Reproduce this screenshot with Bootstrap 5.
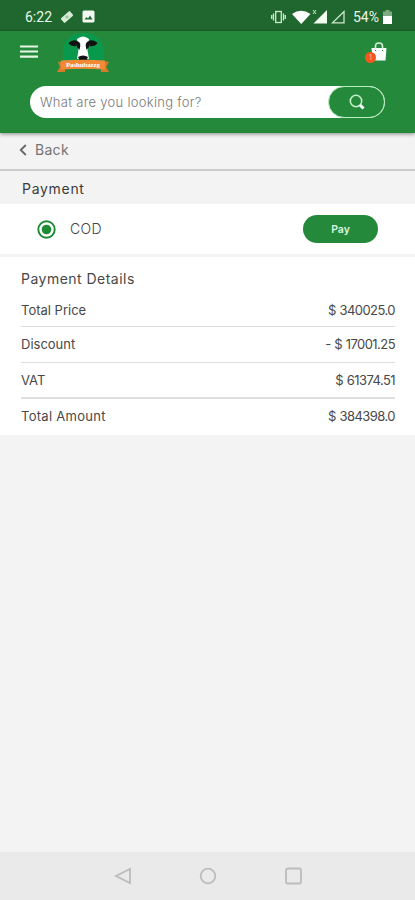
<!DOCTYPE html>
<html lang="en">
<head>
<meta charset="utf-8">
<meta name="viewport" content="width=device-width, initial-scale=1">
<title>Payment</title>
<link href="https://cdn.jsdelivr.net/npm/bootstrap@5.3.0/dist/css/bootstrap.min.css" rel="stylesheet">
<style>
body{font-family:Inter,"Open Sans",sans-serif;font-size:13px;line-height:20px;color:#484848;background:#f3f3f3;height:900px;overflow:hidden}
svg{display:block;flex:none}
.status{height:31px;background:#20672f;color:#e9f6e6;font:400 14px/20px Roboto,sans-serif;padding:2px 23px 0 25px}
.topbar{height:102px;background:#25893c;box-shadow:0 1px 4px rgba(0,0,0,.45);z-index:2}
.brandrow{height:55px;padding:0 24px 0 20px}
.menu{margin-top:14px}
.brand{margin-left:17px}
.search{height:32px;margin:0 30px;background:#fff;border-radius:16px;color:#777;font-size:13px;letter-spacing:.29px;padding:0 0 1px 10px}
.search-btn{width:57px;height:32px;border-radius:16px;background:#25893c;border:1px solid #b9ecc0;margin-bottom:-1px}
.bag{width:24px;height:24px}
.count{left:-2px;top:13px;width:11px;height:11px;background:#f4581c;color:#ffc09a;font-size:7px;line-height:11px}
.back{height:38px;padding:0 0 2px 19px;color:#737373;font-size:14px;letter-spacing:.3px;border-bottom:2px solid #cbcbcb}
.section-name{height:33px;padding:2px 22px 0;font-size:14px;letter-spacing:.7px;color:#3c3c3c}
.method{height:50px;padding:0 37px;font-size:14px;color:#444}
.cod{margin-left:14px;letter-spacing:.4px}
.pay{width:75px;height:28px;border-radius:14px;background:#25893c;color:#dcf7df;font-size:10.5px;font-weight:600;padding:0;line-height:28px}
.details{height:178px;margin-top:3px;padding:12px 20px 0 21px}
.details h2{font-size:14px;line-height:20px;height:24px;font-weight:400;letter-spacing:.48px;margin:0}
.line{height:35.5px}
.line+.line{border-top:1px solid #dedede}
.line.total{border-top:2px solid #dedede}
.line.first{height:33px}
.amount{letter-spacing:-.55px;word-spacing:.5px}
.wide{letter-spacing:.28px}
.l3{font-weight:300}
.sysnav{height:48px;background:#eaeaea}
</style>
</head>
<body class="d-flex flex-column">
<div class="status d-flex align-items-center justify-content-between">
  <div class="d-flex align-items-center">
    <span>6:22</span>
    <svg class="ms-2" width="14" height="14" viewBox="0 0 14 14"><g transform="rotate(-42 7 7)"><rect x="1" y="4" width="12" height="6" rx="1" fill="#d5ecd5"/><path d="M5.500 5.500h3v3h-3z" fill="#9fc5a2"/></g></svg>
    <svg class="ms-2" width="13" height="13" viewBox="0 0 13 13"><rect x=".5" y=".5" width="12" height="12" rx="1.5" fill="#f1faf0"/><path d="M2.500 9.500l2-2.500 1.500 1.500 2-3 2.600 4z" fill="#20672f"/></svg>
  </div>
  <div class="d-flex align-items-center">
    <svg width="75" height="16" viewBox="0 0 75 16">
      <g fill="none" stroke="#cfe8cf" stroke-width="1.300"><rect x="5.700" y="2.500" width="5.600" height="11"/><path d="M3.500 4.500v7M13.500 4.500v7M1.700 6v4M15.300 6v4"/></g>
      <path d="M22 5Q31-1.500 40.500 5L31.200 15z" fill="#fff"/>
      <path d="M57 1v13.500H43.500z" fill="#f4fff2"/><path d="M43 1l3 4M46 1l-3 4" stroke="#cfe8cf"/>
      <path d="M74 2.500v11.400H62.500z" fill="none" stroke="#cfe8cf" stroke-width="1.300"/>
    </svg>
    <span class="pct ms-2">54%</span>
    <svg class="ms-1" width="9" height="14" viewBox="0 0 9 14"><path d="M2.500 0h4v1.500H9V6H0V1.500h2.500z" fill="#7fab84"/><path d="M0 6h9v8H0z" fill="#fff"/></svg>
  </div>
</div>
<header class="topbar position-relative">
  <div class="brandrow d-flex align-items-start">
    <svg class="menu" width="18" height="14" viewBox="0 0 18 14"><path d="M0 1.500h18M0 6.500h18M0 11.600h18" stroke="#e4f8e2" stroke-width="2.200"/></svg>
    <svg class="brand" width="56" height="43" viewBox="0 0 56 43">
      <path d="M8 31V22Q9 2 28 2T49 22v9z" fill="#08994d"/>
      <path d="M3 31l7-1v11H2l3-5zM54 31l-8-1v11h8l-3-5z" fill="#d57b2a"/>
      <path d="M13.500 12q4-4 9-2l-1 5q-5 1-8-3zM42.500 12q-4-4-9-2l1 5q5 1 8-3z" fill="#111"/>
      <path d="M22 8q6-5 12 0l-1.500 11 1.500 9H22l1.500-9z" fill="#fff"/>
      <path d="M22 10q5 1 2.500 9l-2.500-3zM34 10q-5 1-2.500 9l2.500-3z" fill="#111"/>
      <path d="M23 26q5-3 10 0l-2 4h-6z" fill="#111"/>
      <path d="M6 29.500Q28 28 50 29.500v9Q28 37 6 38.500z" fill="#f28a35"/>
      <text x="28" y="36.300" text-anchor="middle" textLength="34" font-family="Liberation Serif" font-weight="700" font-size="7" fill="#fff">Pashubazzg</text>
    </svg>
    <div class="bag position-relative ms-auto mt-2"><svg width="24" height="24" viewBox="0 0 24 24"><path d="M4.500 9h15l-1 12.500h-13z" fill="#fff"/><path d="M8.500 10V7q0-3 3.500-3t3.500 3v3" fill="none" stroke="#d9f3d9" stroke-width="1.600"/><path d="M8 11.500h1M15 11.500h1" stroke="#25893c"/></svg><span class="count position-absolute rounded-circle text-center">1</span></div>
  </div>
  <div class="search d-flex align-items-center justify-content-between"><span class="l3">What are you looking for?</span>
    <span class="search-btn d-flex align-items-center justify-content-center"><svg width="18" height="18" viewBox="0 0 18 18"><circle cx="8" cy="8" r="5.700" fill="none" stroke="#c5efc9" stroke-width="1.600"/><path d="M12 12l3.500 3.500" stroke="#fff" stroke-width="3"/></svg></span></div>
</header>
<div class="back d-flex align-items-center"><svg class="me-2" width="8" height="12" viewBox="0 0 8 12"><path d="M6.800 1L1.700 6l5.100 5" fill="none" stroke="#666" stroke-width="1.800"/></svg><span>Back</span></div>
<div class="section-name d-flex align-items-center"><span>Payment</span></div>
<div class="method bg-white d-flex align-items-center">
  <svg width="19" height="19" viewBox="0 0 19 19"><circle cx="9.500" cy="9.500" r="8.200" fill="none" stroke="#1d8a35" stroke-width="1.900"/><circle cx="9.500" cy="9.500" r="4.800" fill="#1d8a35"/></svg>
  <span class="cod l3">COD</span><button class="pay btn ms-auto">Pay</button>
</div>
<section class="details bg-white">
  <h2>Payment Details</h2>
  <div class="line first d-flex align-items-center justify-content-between"><span>Total Price</span><span class="amount">$ 340025.0</span></div>
  <div class="line d-flex align-items-center justify-content-between"><span>Discount</span><span class="amount">- $ 17001.25</span></div>
  <div class="line d-flex align-items-center justify-content-between"><span>VAT</span><span class="amount">$ 61374.51</span></div>
  <div class="line total d-flex align-items-center justify-content-between"><span class="wide">Total Amount</span><span class="amount">$ 384398.0</span></div>
</section>
<nav class="sysnav mt-auto d-flex align-items-center justify-content-center"><svg width="190" height="18" viewBox="0 0 190 18" fill="none" stroke="#bcbcbc" stroke-width="1.800"><path d="M17 2v14L3 9z"/><circle cx="95" cy="9" r="7.300"/><rect x="173" y="1.500" width="15" height="15" rx="2"/></svg></nav>
<script src="https://cdn.jsdelivr.net/npm/bootstrap@5.3.0/dist/js/bootstrap.bundle.min.js"></script>
</body>
</html>
